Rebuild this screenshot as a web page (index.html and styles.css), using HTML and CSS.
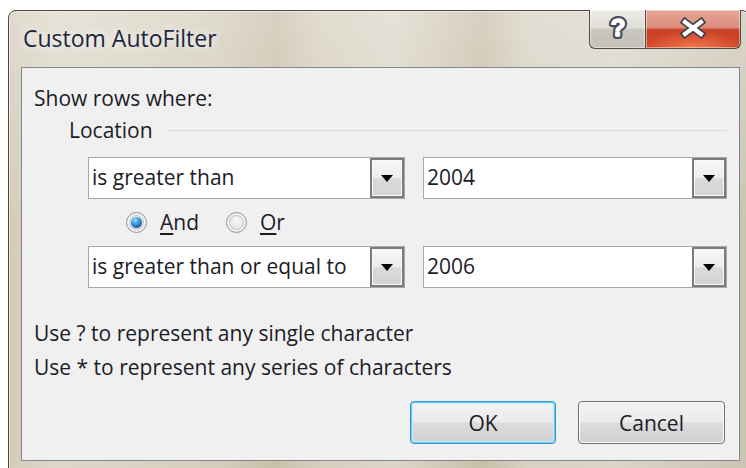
FILE: index.html
```html
<!DOCTYPE html>
<html lang="en">
<head>
<meta charset="utf-8">
<title>Custom AutoFilter</title>
<link rel="stylesheet" href="styles.css">
</head>
<body>
<div class="window">
  <div class="titlebar">
    <span class="title">Custom AutoFilter</span>
    <div class="caption">
      <button class="cap help" type="button" aria-label="Help">
        <svg width="24" height="28" viewBox="0 0 24 28">
          <text x="12" y="22" text-anchor="middle" class="help-edge">?</text>
          <text x="12" y="22" text-anchor="middle" class="help-fill">?</text>
        </svg>
      </button>
      <button class="cap close" type="button" aria-label="Close">
        <svg width="30" height="22" viewBox="0 0 30 22">
          <path class="x-edge" d="M7 5 L23 17 M23 5 L7 17"/>
          <path class="x-fill" d="M7 5 L23 17 M23 5 L7 17"/>
        </svg>
      </button>
    </div>
  </div>

  <div class="client">
    <div class="label">Show rows where:</div>

    <div class="group">
      <span class="group-name">Location</span>
      <span class="rule"></span>
    </div>

    <div class="row">
      <div class="combo op">
        <span class="combo-text">is greater than</span>
        <span class="combo-btn"><svg width="12" height="7" viewBox="0 0 12 7"><polygon points="0,0 12,0 6,7"/></svg></span>
      </div>
      <div class="combo val">
        <span class="combo-text">2004</span>
        <span class="combo-btn"><svg width="12" height="7" viewBox="0 0 12 7"><polygon points="0,0 12,0 6,7"/></svg></span>
      </div>
    </div>

    <div class="radios">
      <label class="radio"><span class="dot checked"></span><span><u>A</u>nd</span></label>
      <label class="radio"><span class="dot"></span><span><u>O</u>r</span></label>
    </div>

    <div class="row row-second">
      <div class="combo op">
        <span class="combo-text">is greater than or equal to</span>
        <span class="combo-btn"><svg width="12" height="7" viewBox="0 0 12 7"><polygon points="0,0 12,0 6,7"/></svg></span>
      </div>
      <div class="combo val">
        <span class="combo-text">2006</span>
        <span class="combo-btn"><svg width="12" height="7" viewBox="0 0 12 7"><polygon points="0,0 12,0 6,7"/></svg></span>
      </div>
    </div>

    <div class="hints">
      <p>Use ? to represent any single character</p>
      <p>Use * to represent any series of characters</p>
    </div>

    <div class="actions">
      <button class="btn btn-default" type="button">OK</button>
      <button class="btn btn-cancel" type="button">Cancel</button>
    </div>
  </div>
</div>
</body>
</html>
```

FILE: styles.css
```css
html, body {
  margin: 0;
  padding: 0;
}

body {
  width: 746px;
  height: 468px;
  overflow: hidden;
  background: #ffffff;
  font-family: "Open Sans", "Noto Sans", "DejaVu Sans", sans-serif;
  color: #1c1c26;
}

/* Aero-style window frame */
.window {
  margin: 10px 0 0 8px;
  width: 742px;
  height: 470px;
  box-sizing: border-box;
  border: 1px solid #4b4840;
  border-radius: 8px 8px 0 0;
  padding: 0 9px 0 12px;
  display: flex;
  flex-direction: column;
  background:
    linear-gradient(180deg, rgba(255, 255, 255, 0.28) 0%, rgba(255, 255, 255, 0) 45%),
    linear-gradient(90deg,
      #d3ccba 0%, #ddd7c8 6%, #d9d3c3 18%, #d4cdbb 28%,
      #c9c0aa 36%, #d6cfbe 42%, #dcd6c8 52%, #cfc7b3 60%,
      #c8bfa9 64%, #d7d1c2 70%, #dad5c8 82%, #d2cbbb 92%, #cbc4b3 100%);
  box-shadow: inset 0 0 0 1px rgba(255, 255, 255, 0.45);
}

.titlebar {
  height: 56px;
  display: flex;
  align-items: flex-start;
  flex-shrink: 0;
}

.title {
  margin: 13px 0 0 2px;
  font-size: 23px;
  line-height: 28px;
  color: #1d2742;
  text-shadow: 0 0 8px rgba(255, 255, 255, 0.75), 0 0 14px rgba(255, 255, 255, 0.5);
}

/* caption buttons */
.caption {
  display: flex;
  margin: -1px -1px 0 auto;
}

.cap {
  height: 39px;
  margin: 0;
  padding: 0 0 3px;
  box-sizing: border-box;
  border: 1px solid #4e4c49;
  border-top: none;
  display: flex;
  align-items: center;
  justify-content: center;
  box-shadow: inset 0 0 0 1px rgba(255, 255, 255, 0.45);
}

.help {
  width: 56px;
  border-right: none;
  border-radius: 0 0 0 6px;
  background: linear-gradient(180deg, #edebe6 0%, #e1ded8 46%, #cbc7bf 52%, #c4c0b7 100%);
}

.close {
  width: 96px;
  border-radius: 0 0 6px 0;
  background:
    radial-gradient(ellipse 60% 45% at 50% 100%, rgba(255, 140, 90, 0.75), rgba(255, 140, 90, 0) 100%),
    linear-gradient(180deg, #e7a697 0%, #dc8d7c 46%, #c9432a 52%, #cc3d22 100%);
}

.help-edge,
.help-fill {
  font-family: "Liberation Sans", "DejaVu Sans", sans-serif;
  font-weight: 700;
  font-size: 24px;
  stroke-linejoin: round;
}

.help-edge {
  fill: #454b5a;
  stroke: #454b5a;
  stroke-width: 6px;
}

.help-fill {
  fill: #ffffff;
  stroke: #ffffff;
  stroke-width: 1.6px;
}

.x-edge {
  stroke: #3d3f48;
  stroke-width: 7.5;
  fill: none;
  stroke-linecap: square;
}

.x-fill {
  stroke: #ffffff;
  stroke-width: 4.2;
  fill: none;
  stroke-linecap: square;
}

/* dialog body */
.client {
  height: 394px;
  flex-shrink: 0;
  box-sizing: border-box;
  border: 1px solid #83878e;
  background: #f0f0f0;
  padding: 17px 12px 0 12px;
  font-size: 21px;
}

.label {
  line-height: 26px;
}

.group {
  display: flex;
  align-items: center;
  height: 26px;
  margin-top: 6px;
  padding-left: 35px;
}

.rule {
  flex: 1;
  height: 1px;
  margin-left: 14px;
  background: #d3dde6;
}

.row {
  display: flex;
  gap: 18px;
  height: 42px;
  margin: 14px 0 0 54px;
}

.row-second {
  margin-top: 11px;
}

.combo {
  display: flex;
  box-sizing: border-box;
  height: 42px;
  border: 1px solid #a6a8ac;
  background: #ffffff;
}

.combo.op {
  width: 317px;
}

.combo.val {
  width: 304px;
}

.combo-text {
  flex: 1;
  padding-left: 3px;
  line-height: 39px;
  white-space: nowrap;
  overflow: hidden;
}

.combo-btn {
  width: 34px;
  box-sizing: border-box;
  border: 2px solid #7b7b7b;
  background: linear-gradient(180deg, #f7f7f7 0%, #ececec 50%, #dadada 52%, #d3d3d3 100%);
  display: flex;
  align-items: center;
  justify-content: center;
  box-shadow: inset 0 0 0 1px #f8f8f8;
}

.combo-btn polygon {
  fill: #000000;
}

/* option buttons */
.radios {
  display: flex;
  align-items: center;
  height: 26px;
  margin-top: 10px;
  padding-left: 92px;
  gap: 27px;
}

.radio {
  display: flex;
  align-items: center;
  gap: 13px;
  line-height: 26px;
}

.dot {
  width: 21px;
  height: 21px;
  box-sizing: border-box;
  border-radius: 50%;
  border: 1px solid #979797;
  background: radial-gradient(circle at 50% 40%, #f7f7f7 0%, #e2e2e2 65%, #cdcdcd 100%);
  box-shadow: inset 0 0 0 2px #f2f2f2, inset 0 0 0 3px #c9c9c9;
  position: relative;
}

.dot.checked::after {
  content: "";
  position: absolute;
  left: 4px;
  top: 4px;
  width: 11px;
  height: 11px;
  border-radius: 50%;
  background: radial-gradient(circle at 40% 30%, #a6e0ff 0%, #3f9be0 35%, #125a9e 80%, #0d3f72 100%);
}

u {
  text-decoration-thickness: 1.5px;
  text-underline-offset: 3px;
}

.hints {
  margin-top: 28px;
  line-height: 34px;
}

.hints p {
  margin: 0;
}

.actions {
  display: flex;
  justify-content: flex-end;
  gap: 22px;
  margin-top: 17px;
  padding-right: 2px;
}

.btn {
  height: 43px;
  box-sizing: border-box;
  border: 1px solid #707070;
  border-radius: 4px;
  background: linear-gradient(180deg, #f3f3f3 0%, #ebebeb 48%, #dddddd 52%, #cfcfcf 100%);
  box-shadow: inset 0 0 0 1px #fbfbfb;
  font-family: inherit;
  font-size: 21px;
  color: #1c1c26;
  padding: 0;
}

.btn-default {
  width: 146px;
  border-color: #3d8fc8;
  box-shadow: inset 0 0 0 1px #5fd0f8, inset 0 0 0 2px #c4ecfb;
}

.btn-cancel {
  width: 147px;
}
```
